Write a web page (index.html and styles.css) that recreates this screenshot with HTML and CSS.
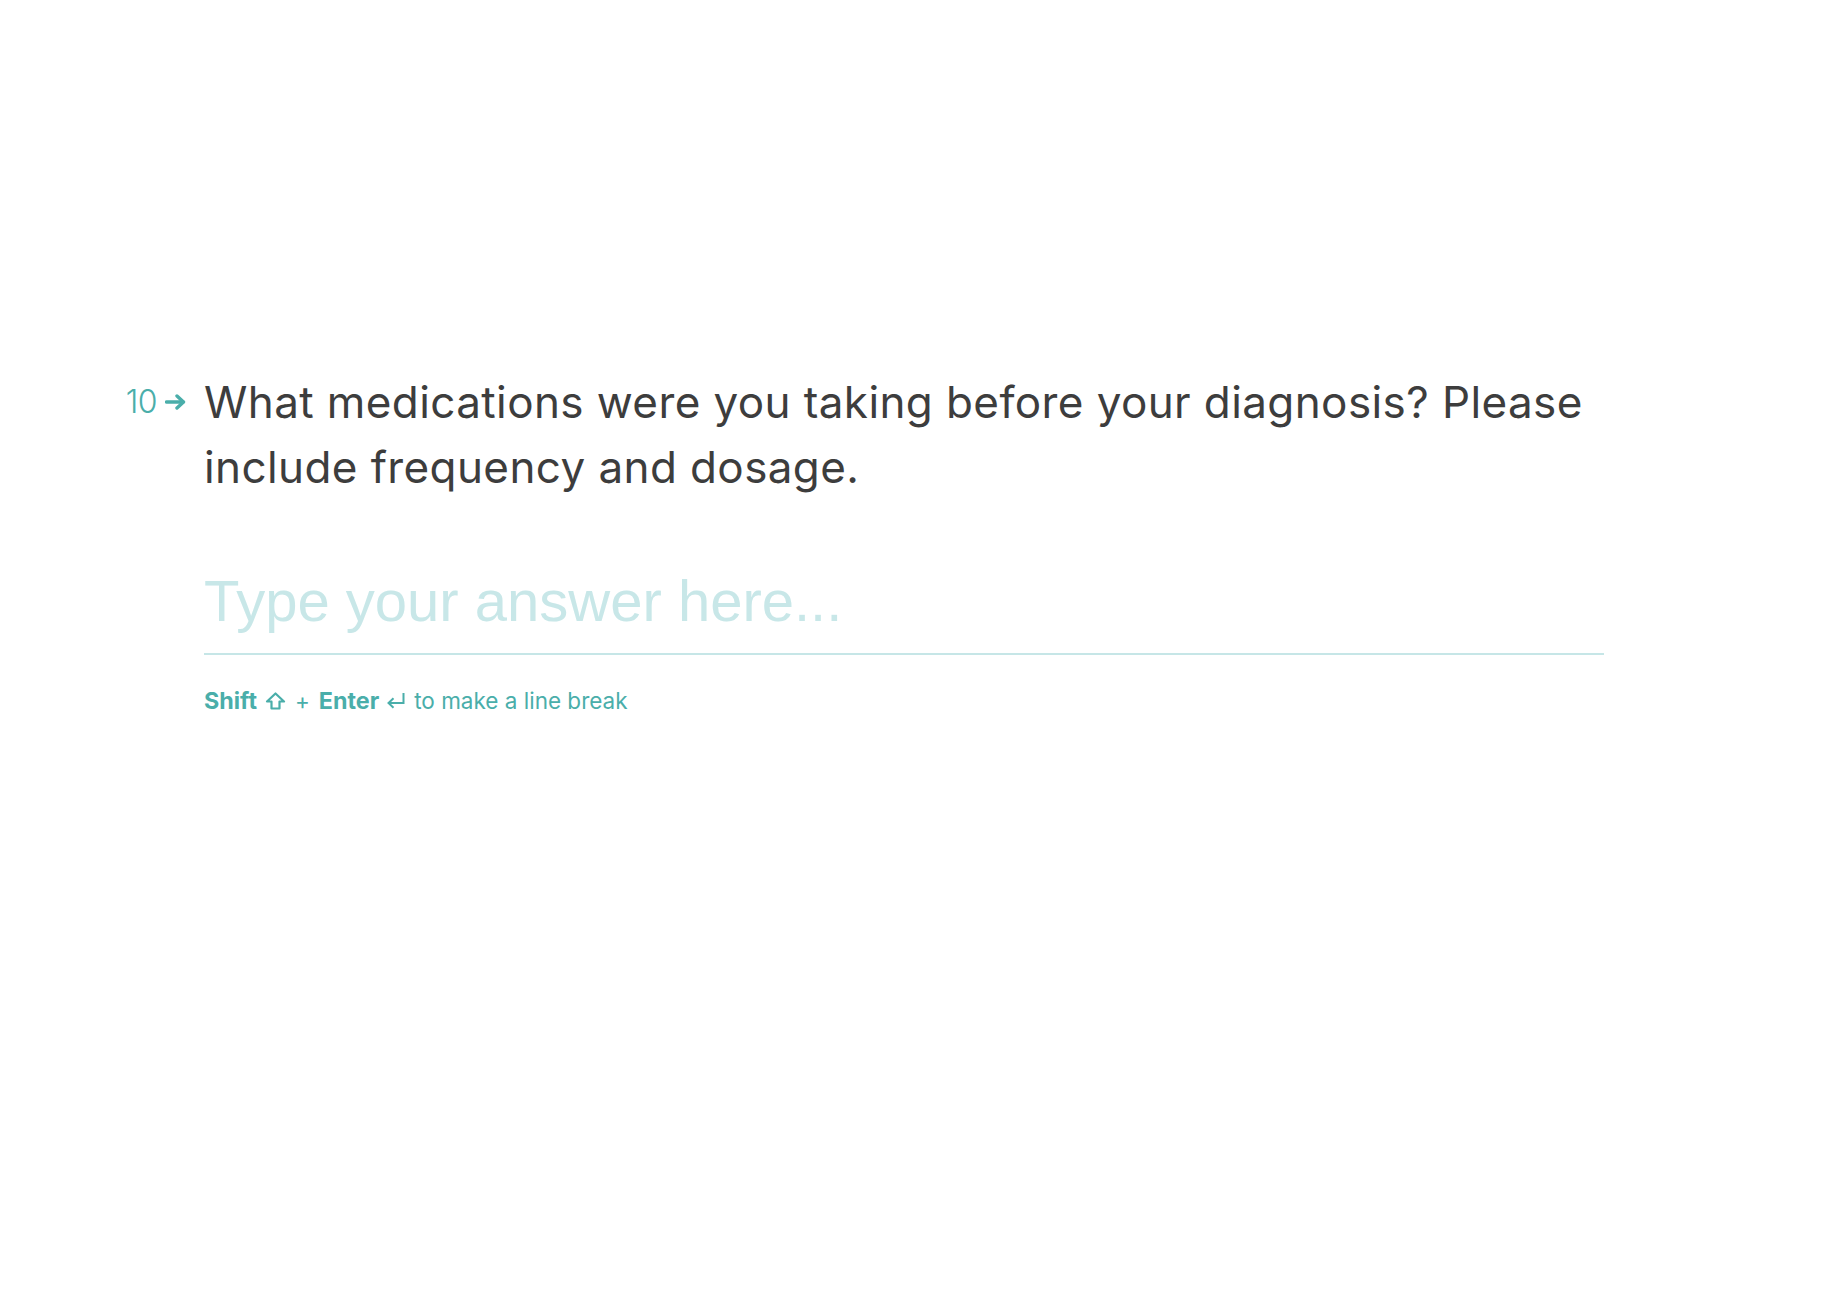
FILE: index.html
```html
<!DOCTYPE html>
<html lang="en">
<head>
<meta charset="utf-8">
<title>Question 10</title>
<link rel="stylesheet" href="styles.css">
</head>
<body>
<main class="page">
  <section class="question">
    <div class="q-num">
      <span class="q-index">10</span>
      <svg class="q-arrow" width="21" height="16" viewBox="0 0 21 16" aria-hidden="true">
        <path d="M1.5 8 H18" stroke="#4aaeaa" stroke-width="3.4" stroke-linecap="round" fill="none"/>
        <path d="M12 2 L18.5 8 L12 14" stroke="#4aaeaa" stroke-width="3.4" stroke-linecap="round" stroke-linejoin="round" fill="none"/>
      </svg>
    </div>
    <h1 class="q-text">What medications were you taking before your diagnosis? Please include frequency and dosage.</h1>
    <div class="answer">
      <input class="answer-input" type="text" placeholder="Type your answer here...">
      <p class="hint"><b>Shift</b><svg class="key-icon shift" width="21" height="18" viewBox="0 0 21 18" aria-hidden="true"><path d="M10.5 1.5 L19 9.5 H14.5 V16.5 H6.5 V9.5 H2 Z" stroke="#4aaeaa" stroke-width="2.2" stroke-linejoin="round" fill="none"/></svg><span class="plus">+</span><b>Enter</b><svg class="key-icon enter" width="19" height="17" viewBox="0 0 19 17" aria-hidden="true"><path d="M17.5 1 V11 H3" stroke="#4aaeaa" stroke-width="2" fill="none"/><path d="M7.5 6.2 L2.5 11 L7.5 15.8" stroke="#4aaeaa" stroke-width="2" fill="none" stroke-linejoin="miter"/></svg><span>to make a line break</span></p>
    </div>
  </section>
</main>
</body>
</html>
```

FILE: styles.css
```css
* { box-sizing: border-box; }

html, body {
  margin: 0;
  padding: 0;
  background: #ffffff;
}

body {
  font-family: "Inter", "Noto Sans", "Liberation Sans", sans-serif;
  color: #3d3d3d;
}

.page {
  padding-top: 370px;
}

.question {
  display: grid;
  grid-template-columns: 204px 1400px;
  align-items: start;
}

.q-num {
  grid-column: 1;
  display: flex;
  justify-content: flex-end;
  align-items: center;
  gap: 8px;
  padding-top: 16px;
  padding-right: 18px;
  height: 48px;
  color: #4aaeaa;
}

.q-index {
  font-size: 32px;
  font-weight: 300;
  line-height: 32px;
  letter-spacing: -0.5px;
}

.q-arrow {
  display: block;
}

.q-text {
  grid-column: 2;
  margin: 0;
  font-size: 44px;
  font-weight: 400;
  line-height: 65px;
  color: #3d3d3d;
  letter-spacing: 0.4px;
}

.answer {
  grid-column: 2;
  padding-top: 65px;
}

.answer-input {
  display: block;
  width: 100%;
  margin: 0;
  padding: 0 0 18px 0;
  border: none;
  border-bottom: 2px solid #c6e6e7;
  outline: none;
  background: transparent;
  font-family: "Liberation Sans", Arial, sans-serif;
  font-size: 58px;
  line-height: 70px;
  height: 90px;
  color: #3d3d3d;
}

.answer-input::placeholder {
  color: #c8e7e8;
  opacity: 1;
}

.hint {
  margin: 30px 0 0 0;
  display: flex;
  align-items: center;
  font-size: 22.5px;
  line-height: 32px;
  color: #4aaeaa;
}

.hint b {
  font-weight: 700;
  font-size: 23.3px;
}

.key-icon {
  display: block;
}

.key-icon.shift {
  margin: 0 9px 0 8px;
}

.plus {
  margin-right: 9px;
}

.key-icon.enter {
  margin: -2px 9px 0 7px;
}
```
